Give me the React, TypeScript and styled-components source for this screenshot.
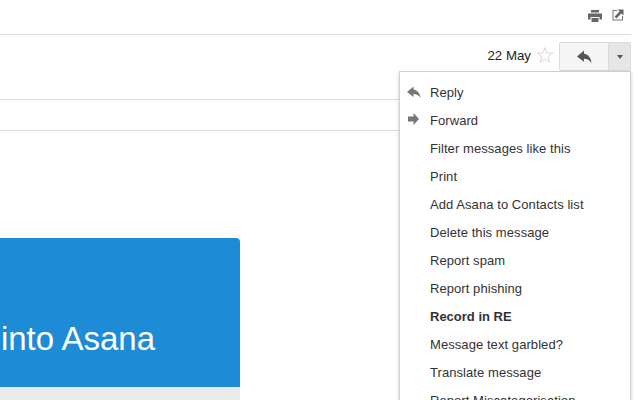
import React from "react";
import styled, { createGlobalStyle } from "styled-components";

const GlobalStyle = createGlobalStyle`
    html, body {
        margin: 0;
        padding: 0;
        width: 640px;
        height: 400px;
        overflow: hidden;
        background: #ffffff;
        font-family: "Liberation Sans", Arial, sans-serif;
    }
`;

const Page = styled.div`
    position: relative;
    width: 640px;
    height: 400px;
    overflow: hidden;
    background: #ffffff;
`;

const TopBar = styled.div`
    box-sizing: border-box;
    width: 631px;
    height: 35px;
    border-bottom: 1px solid #dcdcdc;
    display: flex;
    justify-content: flex-end;
    align-items: flex-start;
    gap: 10px;
    padding-top: 9px;
    padding-right: 7px;
`;

const PrintIcon = styled.svg`
    margin-top: 1px;
`;

const MessageHeader = styled.div`
    box-sizing: border-box;
    width: 631px;
    height: 65px;
    border-bottom: 1px solid #dcdcdc;
    display: flex;
    justify-content: flex-end;
    align-items: flex-start;
    padding-top: 7px;
`;

const DateLabel = styled.span`
    font-size: 13.3px;
    line-height: 28px;
    color: #222222;
    margin-right: 5px;
`;

const StarWrap = styled.span`
    width: 18px;
    height: 18px;
    margin-top: 4px;
    margin-right: 5px;
    display: block;
`;

const ButtonGroup = styled.div`
    display: flex;
    height: 29px;
`;

const ActionButton = styled.div<{ $wide?: boolean }>`
    box-sizing: border-box;
    width: ${(p) => (p.$wide ? "50px" : "22px")};
    height: 29px;
    display: flex;
    align-items: center;
    justify-content: center;
    border: 1px solid #dcdcdc;
    border-left-width: ${(p) => (p.$wide ? "1px" : "0")};
    border-radius: ${(p) => (p.$wide ? "2px 0 0 2px" : "0 2px 2px 0")};
    background: ${(p) => (p.$wide ? "#f5f5f5" : "#e6e6e6")};
`;

const Caret = styled.span`
    width: 0;
    height: 0;
    border-left: 3.5px solid transparent;
    border-right: 3.5px solid transparent;
    border-top: 4px solid #555555;
`;

const SubjectRow = styled.div`
    box-sizing: border-box;
    width: 631px;
    height: 31px;
    border-bottom: 1px solid #dcdcdc;
`;

const Body = styled.div`
    padding-top: 107px;
    width: 240px;
`;

const Banner = styled.div`
    box-sizing: border-box;
    height: 149px;
    background: #1d8bd6;
    border-top-right-radius: 4px;
    display: flex;
    justify-content: flex-end;
    align-items: flex-start;
    padding: 82px 85px 0 0;
    overflow: hidden;
`;

const BannerText = styled.div`
    font-size: 33px;
    line-height: 37px;
    color: #ffffff;
    white-space: nowrap;
`;

const BannerFooter = styled.div`
    height: 13px;
    background: #ebebeb;
`;

const Menu = styled.ul`
    position: absolute;
    left: 399px;
    top: 71px;
    box-sizing: border-box;
    width: 232px;
    margin: 0;
    padding: 7px 0 0;
    list-style: none;
    background: #ffffff;
    border: 1px solid #d0d0d0;
    box-shadow: 0 2px 4px rgba(0, 0, 0, 0.2);
`;

const MenuItem = styled.li<{ $bold?: boolean }>`
    position: relative;
    height: 28px;
    padding-left: 30px;
    font-size: 13px;
    letter-spacing: ${(p) => (p.$bold ? "0" : "0.07px")};
    line-height: 28px;
    color: #333333;
    font-weight: ${(p) => (p.$bold ? 700 : 400)};
    white-space: nowrap;
`;

const MenuIconSlot = styled.span`
    position: absolute;
    left: 7px;
    top: 6px;
    display: flex;
    width: 14px;
    height: 14px;
`;

const ReplyGlyph = ({ size, fill }: { size: number; fill: string }) => (
    <svg width={size} height={size} viewBox="0 0 14 14">
        <path d="M6.5 1.5 L0 7 L6.5 12 V9 C9.5 9 11.5 10 13.5 13 C13.2 8.5 10.5 5 6.5 4.5 Z" fill={fill} />
    </svg>
);

const items = [
    "Filter messages like this",
    "Print",
    "Add Asana to Contacts list",
    "Delete this message",
    "Report spam",
    "Report phishing",
];

const App = () => (
    <Page>
        <GlobalStyle />
        <TopBar>
            <PrintIcon width="14" height="12" viewBox="0 0 14 12">
                <path d="M3 0 H11 V2.5 H3 Z M0 3.5 H14 V9.5 H11.5 V7 H2.5 V9.5 H0 Z M3.5 8 H10.5 V12 H3.5 Z" fill="#666666" />
            </PrintIcon>
            <svg width="12" height="12" viewBox="0 0 12 12">
                <path d="M0.5 1 H5 V2 H1.5 V10.5 H10 V7 H11 V11.5 H0.5 Z" fill="#777777" />
                <path d="M5.5 0.5 H11.5 V6.5 L9.4 4.4 L4.4 9.4 L2.6 7.6 L7.6 2.6 Z" fill="#666666" />
            </svg>
        </TopBar>
        <MessageHeader>
            <DateLabel>22 May</DateLabel>
            <StarWrap>
                <svg width="18" height="18" viewBox="0 0 18 18">
                    <path d="M9 1.5 L11 7 L16.8 7 L12.2 10.6 L13.9 16.3 L9 12.9 L4.1 16.3 L5.8 10.6 L1.2 7 L7 7 Z" fill="none" stroke="#d8d8d8" strokeWidth="1" />
                </svg>
            </StarWrap>
            <ButtonGroup>
                <ActionButton $wide>
                    <ReplyGlyph size={15} fill="#555555" />
                </ActionButton>
                <ActionButton>
                    <Caret />
                </ActionButton>
            </ButtonGroup>
        </MessageHeader>
        <SubjectRow />
        <Body>
            <Banner>
                <BannerText>into Asana</BannerText>
            </Banner>
            <BannerFooter />
        </Body>
        <Menu>
            <MenuItem>
                <MenuIconSlot>
                    <ReplyGlyph size={14} fill="#777777" />
                </MenuIconSlot>
                Reply
            </MenuItem>
            <MenuItem>
                <MenuIconSlot>
                    <svg width="14" height="14" viewBox="0 0 14 14">
                        <path d="M1 3.5 H6.5 V0 L12 6 L6.5 12 V8.5 H1 Z" fill="#777777" />
                    </svg>
                </MenuIconSlot>
                Forward
            </MenuItem>
            {items.map((label) => (
                <MenuItem key={label}>{label}</MenuItem>
            ))}
            <MenuItem $bold>Record in RE</MenuItem>
            <MenuItem>Message text garbled?</MenuItem>
            <MenuItem>Translate message</MenuItem>
            <MenuItem>Report Miscategorisation</MenuItem>
        </Menu>
    </Page>
);

export default App;
